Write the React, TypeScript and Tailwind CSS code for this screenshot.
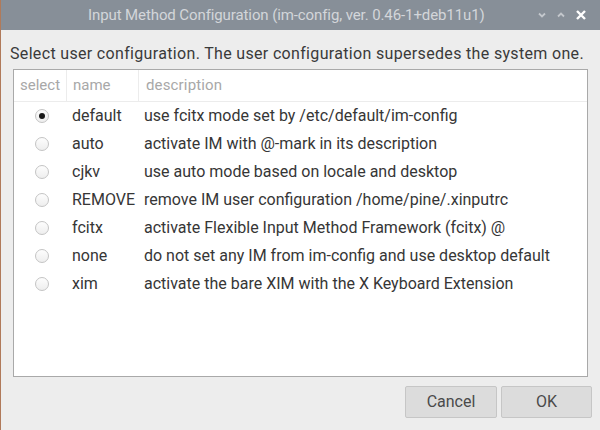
import React from "react";

const rows: [string, string][] = [
  ["default", "use fcitx mode set by /etc/default/im-config"],
  ["auto", "activate IM with @-mark in its description"],
  ["cjkv", "use auto mode based on locale and desktop"],
  ["REMOVE", "remove IM user configuration /home/pine/.xinputrc"],
  ["fcitx", "activate Flexible Input Method Framework (fcitx) @"],
  ["none", "do not set any IM from im-config and use desktop default"],
  ["xim", "activate the bare XIM with the X Keyboard Extension"],
];

function Radio({ checked }: { checked: boolean }) {
  return (
    <div className="w-[14px] h-[14px] rounded-full border border-[#c4c4c4] bg-gradient-to-b from-[#fdfdfd] to-[#eeeeee] flex items-center justify-center">
      {checked && <div className="w-[6px] h-[6px] rounded-full bg-[#1a1a1a]" />}
    </div>
  );
}

export default function App() {
  return (
    <div
      className="w-[600px] h-[430px] flex flex-col bg-[#ededed] border-l border-[#b07a5a] overflow-hidden"
      style={{ fontFamily: "Roboto, 'Liberation Sans', sans-serif" }}
    >
      <div className="h-[30px] shrink-0 bg-[#878f98] flex items-center relative">
        <div className="pl-[87px] text-[15px] text-[#d3d6da] tracking-[-0.1px]">
          Input Method Configuration (im-config, ver. 0.46-1+deb11u1)
        </div>
        <div className="ml-auto flex items-center gap-[9px] pr-[13px]">
          <svg width="10" height="10" viewBox="0 0 10 10">
            <path d="M2 3.5 L5 6.5 L8 3.5" stroke="#c3c7cc" strokeWidth="1.8" fill="none" />
          </svg>
          <svg width="10" height="10" viewBox="0 0 10 10">
            <path d="M2 6.5 L5 3.5 L8 6.5" stroke="#c3c7cc" strokeWidth="1.8" fill="none" />
          </svg>
          <svg width="12" height="12" viewBox="0 0 12 12">
            <path d="M2 2 L10 10 M10 2 L2 10" stroke="#ffffff" strokeWidth="2.4" fill="none" />
          </svg>
        </div>
      </div>
      <div className="flex-1 flex flex-col px-[12px]">
        <div className="pt-[13px] pb-[5px] text-[16px] leading-[21px] text-[#3a3a3a] -ml-[3px] tracking-[0.33px] whitespace-nowrap">
          Select user configuration. The user configuration supersedes the system one.
        </div>
        <div className="h-[308px] border border-[#a9a9a9] bg-white flex flex-col">
          <div className="h-[32px] flex text-[15px] text-[#a8a8a8] border-b border-[#ececec]">
            <div className="w-[53px] flex items-center pl-[6px] border-r border-[#ececec]">select</div>
            <div className="w-[72px] flex items-center pl-[6px] border-r border-[#ececec]">name</div>
            <div className="flex-1 flex items-center pl-[7px] tracking-[0.15px]">description</div>
          </div>
          {rows.map(([n, d], i) => (
            <div key={n} className="h-[28px] flex items-center text-[16px] text-[#363636]">
              <div className="w-[53px] flex justify-center pl-[2px]">
                <Radio checked={i === 0} />
              </div>
              <div className="w-[72px] pl-[5px] whitespace-nowrap">{n}</div>
              <div className="flex-1 pl-[5px] whitespace-nowrap">{d}</div>
            </div>
          ))}
        </div>
        <div className="flex justify-end gap-[4px] pt-[9px] -mr-[4px]">
          <button className="w-[92px] h-[32px] bg-[#dcdcdc] border border-[#c6c6c6] rounded-[2px] text-[16px] text-[#4a4a4a]">
            Cancel
          </button>
          <button className="w-[91px] h-[32px] bg-[#dcdcdc] border border-[#c6c6c6] rounded-[2px] text-[16px] text-[#4a4a4a]">
            OK
          </button>
        </div>
      </div>
    </div>
  );
}
